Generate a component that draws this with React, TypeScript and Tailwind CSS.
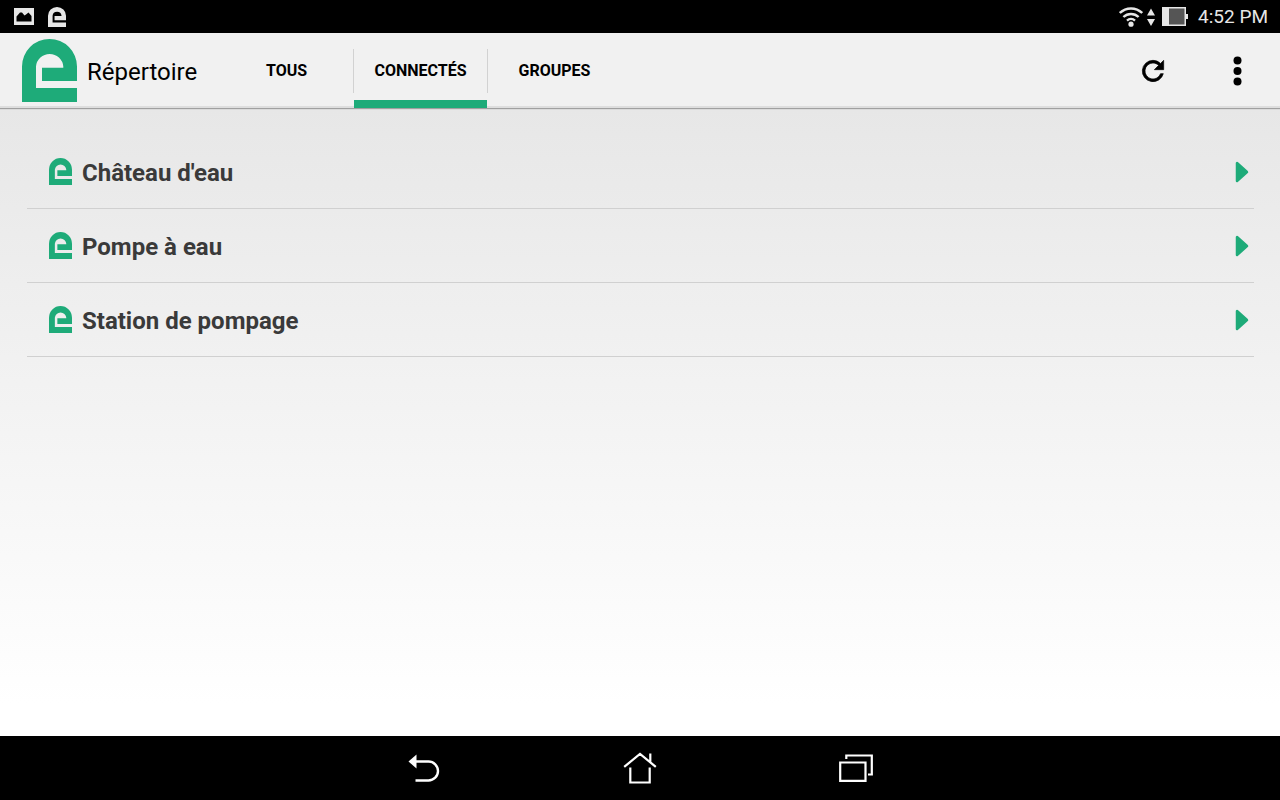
const rows = ["Château d'eau", 'Pompe à eau', 'Station de pompage'];

const tabs = [
  { label: 'TOUS', active: false },
  { label: 'CONNECTÉS', active: true },
  { label: 'GROUPES', active: false },
];

function Logo({ className }: { className: string }) {
  return (
    <svg viewBox="0 0 55 63" preserveAspectRatio="none" className={className} fill="currentColor" aria-hidden="true">
      <path d="M0 63V27.5a27.5 27.5 0 0 1 55 0V42H20V28.7H41.3V27.5a13.7 13.7 0 0 0-27.3 0V49H55V63Z" />
    </svg>
  );
}

function StatusBar() {
  return (
    <div className="flex h-[33px] items-center justify-between bg-black pr-3 pl-[14px] text-[#e6e6e6]">
      <div className="flex items-center gap-[14px]">
        <svg width="20" height="17" viewBox="0 0 20 17" aria-hidden="true">
          <path
            fill="currentColor"
            fillRule="evenodd"
            d="M0 0H20V17H0ZM2.5 13.5H17.5V8L14.5 4.5L12 6.5L10.5 7.5L8 4.5H6L2.5 8.5Z"
          />
        </svg>
        <Logo className="h-5 w-[18px]" />
      </div>
      <div className="flex items-center">
        <svg width="24" height="20" viewBox="0 0 24 20" fill="none" stroke="currentColor" strokeWidth="2.4" aria-hidden="true">
          <path d="M0.8 6a16 16 0 0 1 22.4 0M4.4 10a11 11 0 0 1 15.2 0M8 13.6a6 6 0 0 1 8 0" />
          <circle cx="12" cy="17.2" r="2.6" fill="currentColor" stroke="none" />
        </svg>
        <svg width="8" height="18" viewBox="0 0 8 18" className="ml-1" fill="currentColor" aria-hidden="true">
          <path d="M4 0.5L8 7.5H0ZM4 18L0 11H8Z" />
        </svg>
        <svg width="26" height="19" viewBox="0 0 26 19" className="ml-[7px]" aria-hidden="true">
          <path fill="currentColor" d="M0 0H24V7H26V12H24V19H0Z" />
          <path fill="#555" d="M7 1.5H22.5V17.5H7Z" />
        </svg>
        <span className="ml-[10px] pt-px text-[19px] leading-6">4:52 PM</span>
      </div>
    </div>
  );
}

function Header() {
  return (
    <header className="relative z-10 flex h-[75px] items-stretch border-b-2 border-[#dedede] bg-[#f1f1f1] text-black shadow-[0_1px_1px_#a0a0a0]">
      <div className="flex w-[220px] items-center pt-[2px] pl-[22px]">
        <Logo className="h-[63px] w-[55px] text-[#1eab79]" />
        <h1 className="ml-[10px] pt-[2px] text-[24px] leading-8">Répertoire</h1>
      </div>
      <nav className="-mb-[2px] flex items-stretch">
        {tabs.map((tab, i) => (
          <div key={tab.label} className="flex">
            {i > 0 && <span className="mt-4 h-11 w-px bg-[#d2d2d2]" />}
            <button
              type="button"
              aria-pressed={tab.active}
              className={`w-[133px] border-b-8 pt-2 text-[16px] leading-6 font-bold ${
                tab.active ? 'border-[#1eab79]' : 'border-transparent'
              }`}
            >
              {tab.label}
            </button>
          </div>
        ))}
      </nav>
      <div className="ml-auto flex items-center pt-[2px]">
        <button type="button" aria-label="Actualiser" className="flex w-[85px] justify-center">
          <svg width="32" height="32" viewBox="0 0 24 24" fill="currentColor" stroke="currentColor" strokeWidth="0.5" aria-hidden="true">
            <path d="M17.65 6.35A7.95 7.95 0 0 0 12 4a8 8 0 1 0 7.73 10h-2.08A6 6 0 1 1 12 6c1.66 0 3.14.69 4.22 1.78L13 11h7V4z" />
          </svg>
        </button>
        <button type="button" aria-label="Plus d'options" className="flex w-[85px] justify-center">
          <svg width="10" height="30" viewBox="0 0 10 30" fill="currentColor" aria-hidden="true">
            <circle cx="4.5" cy="4.5" r="4" />
            <circle cx="4.5" cy="15" r="4" />
            <circle cx="4.5" cy="25.5" r="4" />
          </svg>
        </button>
      </div>
    </header>
  );
}

function NavBar() {
  return (
    <nav className="flex h-16 items-center justify-center gap-[152px] bg-black text-white">
      <button type="button" aria-label="Retour" className="flex w-16 justify-center">
        <svg width="32" height="28" viewBox="0 0 32 28" aria-hidden="true">
          <path d="M7 7.5H20.5a9.5 9.5 0 0 1 0 19H7.5" fill="none" stroke="currentColor" strokeWidth="2.4" />
          <path d="M0.5 7.5L8.5 0.5V14.5Z" fill="currentColor" />
        </svg>
      </button>
      <button type="button" aria-label="Accueil" className="flex w-16 justify-center">
        <svg width="34" height="32" viewBox="0 0 34 32" fill="none" stroke="currentColor" strokeWidth="2.2" aria-hidden="true">
          <path d="M1.2 14.8L17 2L32.8 14.8M27.3 10V1.5M7.3 15.5V30.5H26.7V15.5" />
        </svg>
      </button>
      <button type="button" aria-label="Applications récentes" className="flex w-16 justify-center">
        <svg width="34" height="28" viewBox="0 0 34 28" fill="none" stroke="currentColor" strokeWidth="2.2" aria-hidden="true">
          <path d="M1.2 8.5H26.5V26.8H1.2ZM7.3 5V1.5H32.8V20.5H29" />
        </svg>
      </button>
    </nav>
  );
}

export default function App() {
  return (
    <div className="flex min-h-screen flex-col font-[Roboto,sans-serif]">
      <StatusBar />
      <Header />
      <main className="flex-1 bg-linear-to-b from-[#e7e7e7] to-white to-95% pt-[27px] pr-[26px] pl-[27px]">
        <ul>
          {rows.map((name) => (
            <li key={name} className="border-b border-[#d0d0d0]">
              <button type="button" className="flex h-[73px] w-full items-center pr-[5px] pl-[22px] text-left">
                <Logo className="h-[27px] w-[23px] text-[#1eab79]" />
                <span className="ml-[10px] pt-[2px] text-[24px] leading-8 font-bold text-[#3a3a3a]">{name}</span>
                <svg width="14" height="22" viewBox="0 0 14 22" className="ml-auto text-[#1eab79]" aria-hidden="true">
                  <path
                    d="M2 2V20L12 11Z"
                    fill="currentColor"
                    stroke="currentColor"
                    strokeWidth="2.5"
                    strokeLinejoin="round"
                  />
                </svg>
              </button>
            </li>
          ))}
        </ul>
      </main>
      <NavBar />
    </div>
  );
}
